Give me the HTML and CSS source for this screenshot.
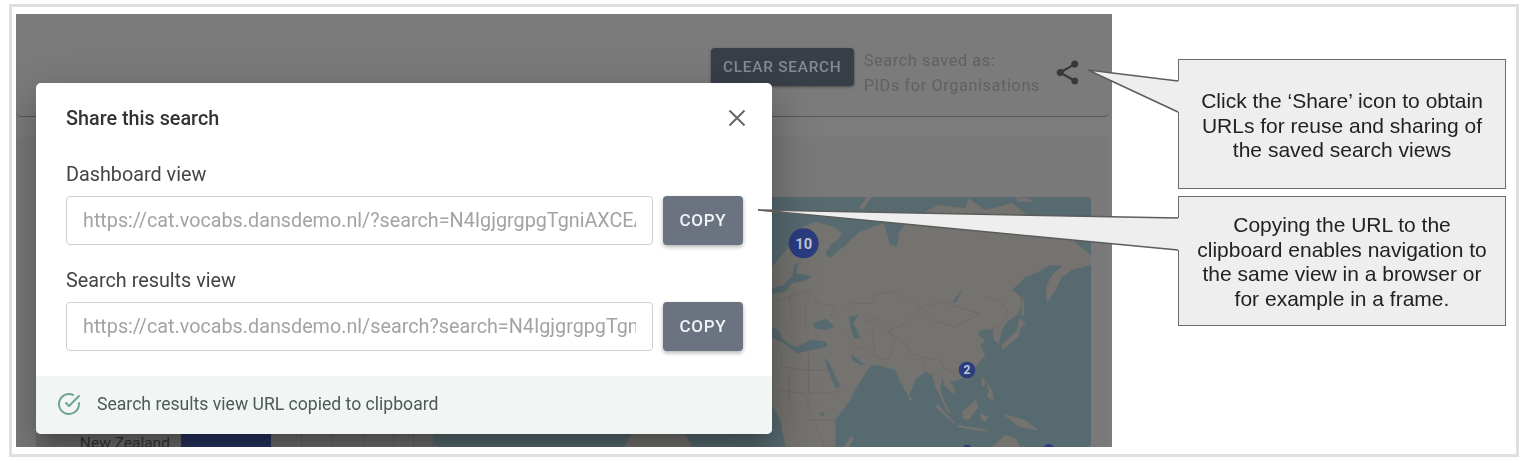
FILE: index.html
```html
<!DOCTYPE html>
<html lang="en">
<head>
  <meta charset="UTF-8" />
  <title>Share this search</title>
  <link rel="stylesheet" href="styles.css">
</head>
<body>
  <div class="frame">
    <div class="shot">
      <div class="topbar">
        <button class="btnClear">CLEAR SEARCH</button>
        <div class="saved">Search saved as:<br>PIDs for Organisations</div>
        <svg class="iconShare" viewBox="0 0 24 24"><path d="M18 16.08c-.76 0-1.44.3-1.96.77L8.91 12.7c.05-.23.09-.46.09-.7s-.04-.47-.09-.7l7.05-4.11c.54.5 1.25.81 2.04.81 1.66 0 3-1.34 3-3s-1.34-3-3-3-3 1.34-3 3c0 .24.04.47.09.7L8.04 9.81C7.5 9.31 6.79 9 6 9c-1.66 0-3 1.34-3 3s1.34 3 3 3c.79 0 1.5-.31 2.04-.81l7.12 4.16c-.05.21-.08.43-.08.65 0 1.61 1.31 2.92 2.92 2.92s2.92-1.31 2.92-2.92-1.31-2.92-2.92-2.92z"/></svg>
      </div>

      <div class="dash">
        <div class="chart">
          <div class="chartRow">
            <span class="chartAxis"></span>
            <span class="chartLabel">New Zealand</span>
            <span class="chartBar"></span>
            <span class="chartCell"></span>
            <span class="chartCell"></span>
            <span class="chartCell"></span>
            <span class="chartCell"></span>
            <span class="chartCell narrow"></span>
            <span class="chartCell narrow"></span>
          </div>
        </div>
        <svg class="map" viewBox="-1014 21 1971 750" preserveAspectRatio="none">
          <rect x="-1014" y="21" width="1971" height="750" fill="#566a70"/>
          <g fill="#75736f">
            <path d="M-60 300L0 232L25 200L48 175L60 150L85 115L130 95L185 110L210 130L195 150L180 160L160 190L175 205L195 185L215 170L235 150L265 125L300 112L335 100L345 130L355 165L375 170L380 130L400 100L440 80L470 60L500 45L580 55L590 25L640 60L720 40L760 70L850 105L900 150L957 195L957 225L900 240L870 262L850 300L825 340L822 290L840 255L870 228L835 225L800 245L760 262L720 300L745 318L748 345L735 375L705 395L690 420L680 462L665 450L662 418L625 420L618 435L640 450L625 465L640 495L620 520L600 550L560 570L535 575L550 600L545 612L520 590L510 560L505 600L520 640L535 670L525 665L505 620L490 590L480 555L460 545L430 570L410 620L385 575L368 540L335 530L300 525L290 535L265 575L250 600L235 630L190 690L190 771L40 771L25 690L0 645L-60 640Z"/>
            <path d="M-444 771L-420 732L-260 732L-240 771Z"/>
            <path d="M262 50L285 21L300 21L272 60Z"/>
            <path d="M690 480L740 440L745 415L762 400L742 385L735 420L690 465Z"/>
            <path d="M750 320L756 335L755 380L748 375Z"/>
            <path d="M630 565L640 568L636 592L628 588Z"/>
            <path d="M640 572L660 600L665 632L645 620L650 600Z"/>
            <path d="M570 665L610 630L620 650L590 690L572 685Z"/>
            <path d="M495 640L550 700L540 697L490 650Z"/>
            <path d="M555 705L650 720L640 725L555 712Z"/>
            <path d="M625 670L650 680L640 697L628 690Z"/>
            <path d="M690 670L760 690L800 722L740 710Z"/>
            <path d="M660 771L700 735L730 745L745 771Z"/>
            <path d="M412 620L420 625L416 634L410 630Z"/>
            <path d="M215 771L238 738L246 742L232 771Z"/>
            <path d="M730 21L770 25L780 35L740 35Z"/>
          </g>
          <g fill="#566a70">
            <path d="M-60 405L0 410L20 420L30 445L55 465L75 470L115 450L165 455L165 470L75 490L30 455L0 445L-60 450Z"/>
            <path d="M125 400L160 385L190 410L160 420L125 415Z"/>
            <path d="M230 380L260 375L245 400L265 445L245 445L235 410Z"/>
            <path d="M65 230L80 215L72 250L120 258L100 272L60 280L40 305L0 312L0 295L35 285L62 255Z"/>
            <path d="M155 505L170 515L205 590L190 595Z"/>
            <path d="M240 495L280 525L265 525L240 510Z"/>
            <path d="M540 338L570 298L555 335Z"/>
            <path d="M142 668L160 668L150 682Z"/>
          </g>
          <g fill="none" stroke="#6b6567" stroke-width="2">
            <path d="M225 360L240 340L300 340L310 310L370 305L400 330L450 350L510 335L600 365L625 370L600 385L545 410L480 390L450 352"/>
            <path d="M280 395L310 385L350 420L400 400L450 352"/>
            <path d="M350 425L400 460L420 490L480 510L500 500L510 530L540 545L560 570"/>
            <path d="M300 420L310 500L350 510L370 450L350 425"/>
            <path d="M220 430L260 470L310 500M260 470L240 500"/>
            <path d="M0 335L50 320L110 300L140 340L190 350L175 380M50 320L60 390M100 340L100 410"/>
            <path d="M30 490L30 530L100 540L170 540M110 490L110 610L170 610M20 600L100 610L120 690M170 610L210 600M50 540L50 640M100 690L190 690M130 700L160 771"/>
            <path d="M455 510L460 540L480 555L505 545"/>
            <path d="M640 320L690 340L710 370L680 410L640 425"/>
          </g>
          <circle cx="95" cy="160" r="45" fill="#2b3c80"/>
          <circle cx="585" cy="540" r="25" fill="#2b3c80"/>
          <circle cx="585" cy="778" r="14" fill="#2b3c80"/>
          <circle cx="830" cy="780" r="18" fill="#2b3c80"/>
          <text class="mapNum" x="95" y="176" font-size="44">10</text>
          <text class="mapNum" x="585" y="553" font-size="36">2</text>
        </svg>
      </div>

      <div class="modal">
        <div class="modalHead">
          <h2>Share this search</h2>
          <svg class="iconClose" viewBox="0 0 18 18"><path d="M1.5 1.5l15 15M16.5 1.5l-15 15"/></svg>
        </div>
        <div class="modalBody">
          <label>Dashboard view</label>
          <div class="urlRow">
            <input readonly value="https://cat.vocabs.dansdemo.nl/?search=N4IgjgrgpgTgniAXCEAXCBMA">
            <button class="btnCopy">COPY</button>
          </div>
          <label>Search results view</label>
          <div class="urlRow">
            <input readonly value="https://cat.vocabs.dansdemo.nl/search?search=N4IgjgrgpgTgniAXCEAX">
            <button class="btnCopy">COPY</button>
          </div>
        </div>
        <div class="modalFoot">
          <svg class="iconCheck" viewBox="0 0 24 24"><path d="M22 11.1V12a10 10 0 1 1-5.9-9.1"/><path d="M22 4L12 14l-3-3"/></svg>
          <span>Search results view URL copied to clipboard</span>
        </div>
      </div>
    </div>

    <div class="notes">
      <div class="note note1">Click the ‘Share’ icon to obtain<br>URLs for reuse and sharing of<br>the saved search views</div>
      <div class="note note2">Copying the URL to the<br>clipboard enables navigation to<br>the same view in a browser or<br>for example in a frame.</div>
    </div>

    <svg class="tails" viewBox="0 0 1510 453">
      <polygon class="tailFill" points="1076,63 1166,74 1168,74 1168,105 1166,105"/>
      <polyline class="tailLine" points="1166,74 1076,63 1166,105"/>
      <polygon class="tailFill" points="746,203 1166,211 1168,211 1168,243 1166,243"/>
      <polyline class="tailLine" points="1166,211 746,203 1166,243"/>
    </svg>
  </div>
</body>
</html>
```

FILE: styles.css
```css
* {
  box-sizing: border-box;
}

body {
  margin: 0;
  background-color: #fff;
  font-family: Roboto, sans-serif;
}

.frame {
  position: relative;
  display: flex;
  align-items: flex-start;
  width: 1510px;
  height: 453px;
  margin: 4px 0 0 9px;
  padding: 7px 0 0 4px;
  border: 3px solid #dfdfdf;
  filter: blur(0.4px);
}

/* dimmed screenshot */
.shot {
  position: relative;
  flex: none;
  width: 1096px;
  height: 433px;
  overflow: hidden;
  background-color: #7c7c7c;
}

.topbar {
  display: flex;
  align-items: flex-start;
  justify-content: flex-end;
  width: 1093px;
  height: 103px;
  padding: 34px 27px 0 0;
  border-bottom: 1px solid #575757;
  border-radius: 0 0 5px 5px;
  background-color: #7b7b7b;
}

.btnClear {
  width: 143px;
  height: 38px;
  padding: 0;
  margin-right: 10px;
  border: none;
  border-radius: 4px;
  background-color: #393f49;
  color: #868b91;
  font-family: Roboto, sans-serif;
  font-size: 15.4px;
  font-weight: 500;
  letter-spacing: 0.75px;
  box-shadow: 0 1px 3px rgba(0, 0, 0, 0.4);
}

.saved {
  color: #616161;
  font-size: 16.3px;
  line-height: 25px;
  letter-spacing: 0.6px;
}

.iconShare {
  width: 29px;
  height: 29px;
  margin: 10px 0 0 13px;
  fill: #383838;
}

.dash {
  display: flex;
  width: 1093px;
  margin-top: 20px;
  padding: 60px 18px 0 20px;
  border-radius: 5px;
  background-color: #797979;
}

.chart {
  flex: 1;
  padding-top: 236px;
  overflow: hidden;
}

.chartRow {
  display: flex;
  height: 20px;
  background-color: #6c6c6c;
}

.chartAxis {
  width: 19px;
  border-right: 1px solid #616161;
}

.chartLabel {
  width: 127px;
  padding-left: 25px;
  color: #333;
  font-size: 15.5px;
  line-height: 20px;
}

.chartBar {
  width: 91px;
  background-color: #25325c;
}

.chartCell {
  width: 31px;
  border-right: 1px solid #616161;
}

.chartCell.narrow {
  width: 20px;
}

.map {
  flex: none;
  display: block;
  width: 657px;
  height: 250px;
  border-radius: 4px;
}

.mapNum {
  fill: #c3c7d6;
  font-family: Roboto, sans-serif;
  font-weight: 700;
  text-anchor: middle;
}

/* share dialog */
.modal {
  position: absolute;
  left: 20px;
  top: 69px;
  display: flex;
  flex-direction: column;
  width: 736px;
  height: 351px;
  overflow: hidden;
  border-radius: 5px;
  background-color: #fff;
  box-shadow: 0 11px 15px -7px rgba(0, 0, 0, 0.2), 0 24px 38px 3px rgba(0, 0, 0, 0.14), 0 9px 46px 8px rgba(0, 0, 0, 0.12);
}

.modalHead {
  display: flex;
  align-items: center;
  justify-content: space-between;
  height: 70px;
  padding: 0 26px 0 30px;
}

.modalHead h2 {
  margin: 0;
  color: #333;
  font-size: 19.8px;
  font-weight: 500;
}

.iconClose {
  width: 18px;
  height: 18px;
  fill: none;
  stroke: #666;
  stroke-width: 2;
}

.modalBody {
  flex: 1;
  padding: 10px 29px 0 30px;
}

.modalBody label {
  display: block;
  color: #444;
  font-size: 19.8px;
  line-height: 24px;
  margin-bottom: 9px;
}

.urlRow {
  display: flex;
  gap: 10px;
  height: 49px;
  margin-bottom: 24px;
}

.urlRow input {
  flex: 1;
  min-width: 0;
  padding: 0 16px;
  border: 1px solid #cfcfcf;
  border-radius: 4px;
  color: #a3a3a3;
  font-family: Roboto, sans-serif;
  font-size: 19.75px;
  outline: none;
}

.btnCopy {
  width: 80px;
  padding: 0 0 2px;
  border: none;
  border-radius: 4px;
  background-color: #6b7280;
  color: #f1f2f4;
  font-family: Roboto, sans-serif;
  font-size: 17px;
  font-weight: 500;
  letter-spacing: 0.7px;
  box-shadow: 0 2px 4px rgba(0, 0, 0, 0.3);
}

.modalFoot {
  display: flex;
  align-items: center;
  gap: 16px;
  height: 58px;
  padding: 0 0 2px 21px;
  background-color: #f1f5f3;
  color: #4e5a56;
  font-size: 17.6px;
}

.iconCheck {
  width: 24px;
  height: 24px;
  fill: none;
  stroke: #6fa58e;
  stroke-width: 2;
  stroke-linecap: round;
  stroke-linejoin: round;
}

/* callouts */
.notes {
  display: flex;
  flex-direction: column;
  gap: 7px;
  margin: 45px 0 0 66px;
}

.note {
  width: 328px;
  height: 130px;
  padding-top: 29px;
  border: 1.5px solid #6b6b6b;
  background-color: #eee;
  color: #222;
  font-family: "Liberation Sans", Arial, sans-serif;
  font-size: 21px;
  line-height: 24.5px;
  text-align: center;
}

.note2 {
  padding-top: 16px;
}

.tails {
  position: absolute;
  left: 0;
  top: 0;
  width: 1510px;
  height: 453px;
  pointer-events: none;
}

.tailFill {
  fill: #eee;
}

.tailLine {
  fill: none;
  stroke: #5c5c5c;
  stroke-width: 1.5;
}
```
